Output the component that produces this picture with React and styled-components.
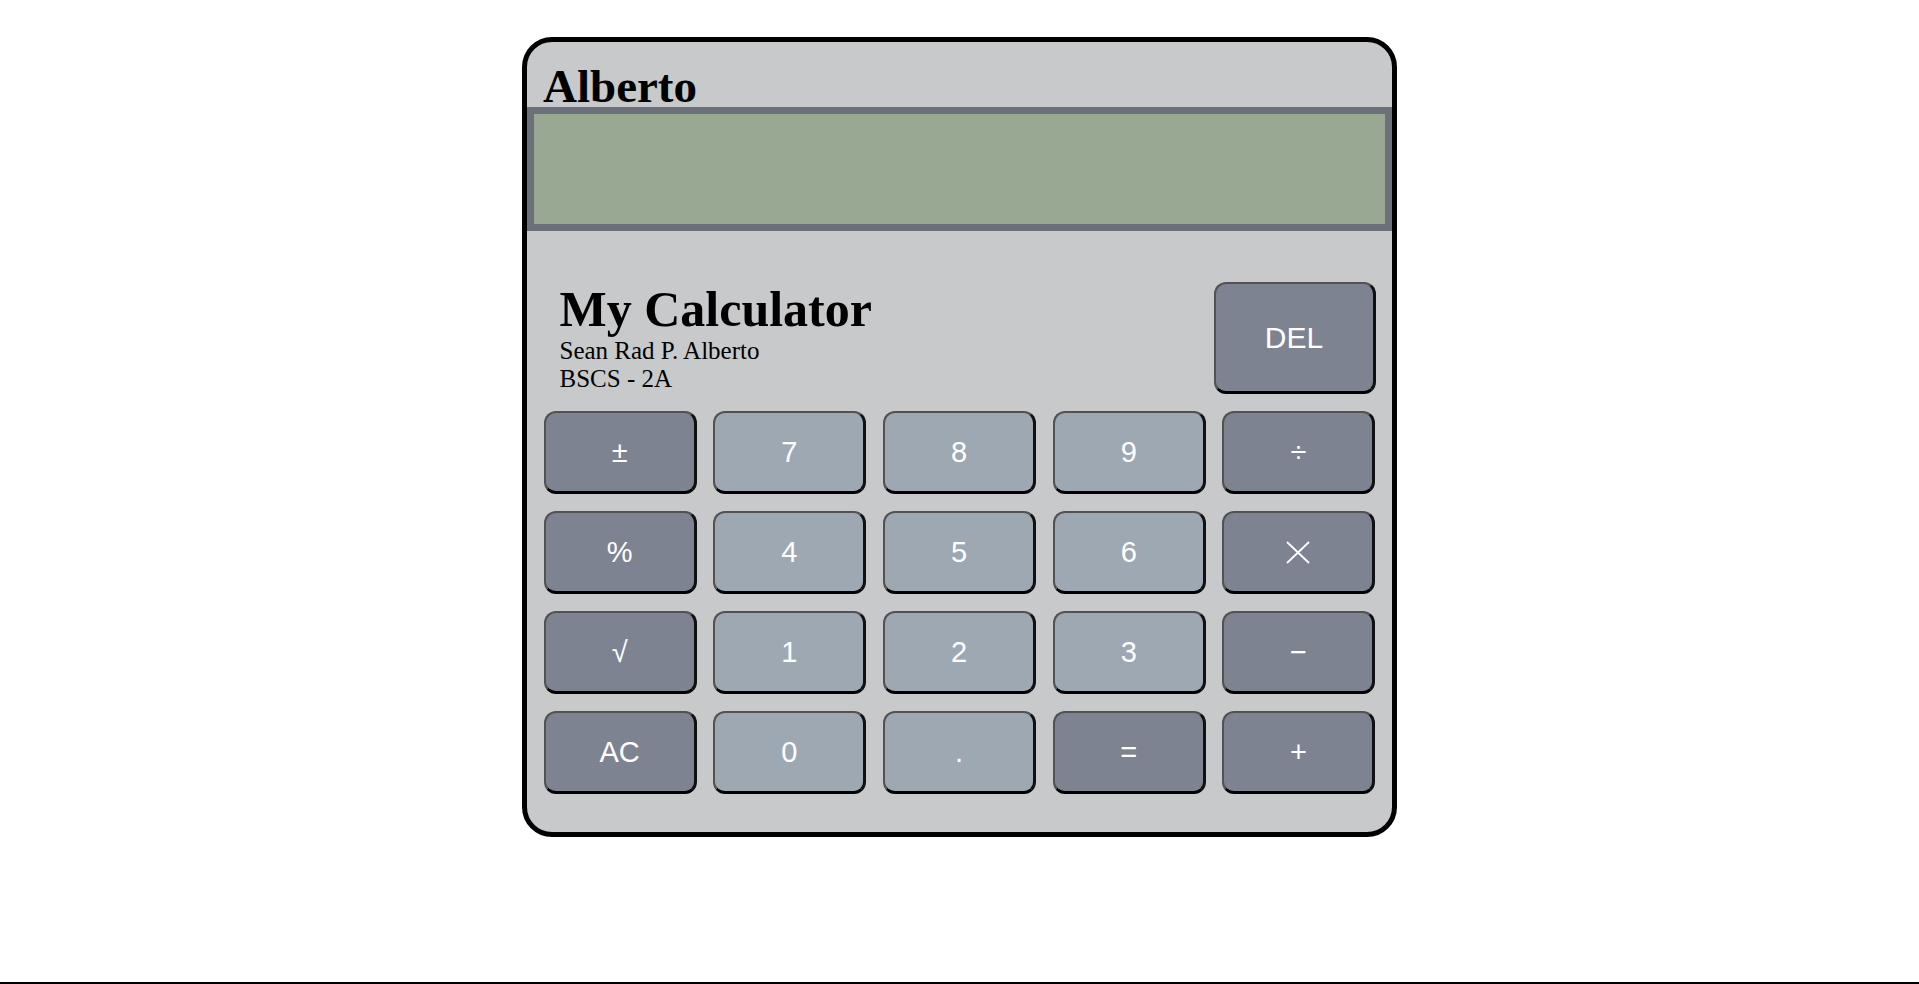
import React from 'react'
import styled, { createGlobalStyle } from 'styled-components'

const GlobalStyle = createGlobalStyle`
    body {
        margin: 0;
        font-family: "Liberation Serif", "Times New Roman", serif;
        background: #fff;
    }
`

const Page = styled.div`
    box-sizing: border-box;
    height: 100vh;
    padding-top: 37px;
    display: flex;
    justify-content: center;
    align-items: flex-start;
    border-bottom: 2px solid #000;
`

const Calculator = styled.div`
    box-sizing: border-box;
    width: 875px;
    border: 5px solid #000;
    border-radius: 30px;
    background-color: #c8c9cb;
    overflow: hidden;
`

const Brand = styled.h1`
    box-sizing: border-box;
    height: 65px;
    margin: 0;
    padding: 23px 16px 0;
    font-size: 47px;
    line-height: 42px;
    font-weight: bold;
    color: #000;
`

const Screen = styled.div`
    box-sizing: border-box;
    height: 124px;
    border: 7px solid #6b707a;
    background-color: #99a892;
`

const InfoRow = styled.div`
    display: flex;
    justify-content: space-between;
    align-items: flex-start;
    margin-top: 51px;
    padding: 0 16.5px 0 32.5px;
`

const Title = styled.h2`
    margin: 0;
    font-size: 50px;
    font-weight: bold;
    line-height: 55px;
`

const Info = styled.p`
    margin: 0;
    font-size: 25px;
    line-height: 28px;
`

const Key = styled.button`
    box-sizing: border-box;
    display: flex;
    align-items: center;
    justify-content: center;
    padding: 0;
    border-style: solid;
    border-width: 2px 3px 3px 2px;
    border-color: #525252 #111 #000 #525252;
    border-radius: 12px;
    background-color: ${props => props.$op ? '#7e8391' : '#9ea8b3'};
    color: #fff;
    font-family: "Liberation Sans", Arial, sans-serif;
    font-size: 29px;
`

const DelKey = styled(Key)`
    width: 162px;
    height: 112px;
    font-size: 30px;
`

const Keypad = styled.div`
    display: grid;
    grid-template-columns: repeat(5, 1fr);
    grid-auto-rows: 83px;
    gap: 17px 16.5px;
    padding: 17px 16.5px 38px;
`

const Times = () => (
    <svg width="24" height="23" viewBox="0 0 24 23">
        <path d="M1 1 L23 22 M23 1 L1 22" stroke="#fff" strokeWidth="1.8" fill="none" />
    </svg>
)

const keys = [
    { label: '±', op: true }, { label: '7' }, { label: '8' }, { label: '9' }, { label: '÷', op: true },
    { label: '%', op: true }, { label: '4' }, { label: '5' }, { label: '6' }, { label: <Times />, op: true },
    { label: '√', op: true }, { label: '1' }, { label: '2' }, { label: '3' }, { label: '−', op: true },
    { label: 'AC', op: true }, { label: '0' }, { label: '.' }, { label: '=', op: true }, { label: '+', op: true },
]

export default class App extends React.Component {
    render() {
        return (
            <Page>
                <GlobalStyle />
                <Calculator>
                    <Brand>Alberto</Brand>
                    <Screen />
                    <InfoRow>
                        <div>
                            <Title>My Calculator</Title>
                            <Info>Sean Rad P. Alberto</Info>
                            <Info>BSCS - 2A</Info>
                        </div>
                        <DelKey $op>DEL</DelKey>
                    </InfoRow>
                    <Keypad>
                        {keys.map((k, i) => (
                            <Key key={i} $op={k.op}>{k.label}</Key>
                        ))}
                    </Keypad>
                </Calculator>
            </Page>
        )
    }
}
